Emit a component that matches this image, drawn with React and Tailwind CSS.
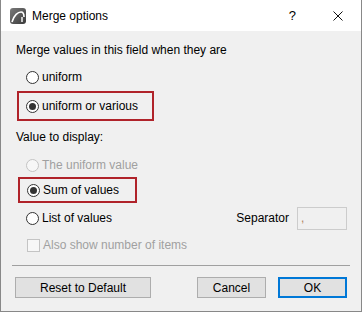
import React from "react";

const FONT = { fontFamily: '"Liberation Sans", Arial, sans-serif' };

function Radio({ checked, disabled }) {
  return (
    <span
      className={`w-[13px] h-[13px] rounded-full border flex items-center justify-center shrink-0 ${
        disabled ? "border-[#c4c4c4] bg-[#f7f7f7]" : "border-[#333] bg-white"
      }`}
    >
      {checked && <span className="w-[7px] h-[7px] rounded-full bg-[#333]" />}
    </span>
  );
}

function AppIcon() {
  return (
    <svg width="16" height="16" viewBox="0 0 16 16">
      <defs>
        <linearGradient id="g" x1="0" y1="0" x2="1" y2="1">
          <stop offset="0" stopColor="#7a7a7a" />
          <stop offset="1" stopColor="#3a3a3a" />
        </linearGradient>
      </defs>
      <rect x="0" y="0" width="16" height="16" rx="3" fill="url(#g)" />
      <path d="M2 14 C4 7 8 4 11 4 C13 4 14 6 14 9" stroke="#fff" strokeWidth="1.6" fill="none" />
      <path d="M12 9 L12 14" stroke="#fff" strokeWidth="1.4" />
    </svg>
  );
}

function Button({ children, primary, className }) {
  return (
    <button
      type="button"
      className={`h-[21px] bg-[#e1e1e1] text-[12px] text-black flex items-center justify-center ${
        primary ? "border-2 border-[#0078d7]" : "border border-[#adadad]"
      } ${className}`}
    >
      {children}
    </button>
  );
}

export default function App() {
  return (
    <div className="w-[362px] h-[312px] flex flex-col text-[12px] text-black" style={FONT}>
      <div className="h-[31px] bg-white flex items-center pl-[9px] pr-[18px] border-l border-r border-[#888]">
        <AppIcon />
        <span className="ml-[6px] text-[12px] flex-1">Merge options</span>
        <span className="text-[13px] mr-[37px]">?</span>
        <svg width="10" height="10" viewBox="0 0 10 10">
          <path d="M0.5 0.5 L9.5 9.5 M9.5 0.5 L0.5 9.5" stroke="#111" strokeWidth="1" />
        </svg>
      </div>
      <div className="flex-1 bg-[#f0f0f0] border-l border-r border-b border-[#888] flex flex-col">
        <div className="h-[16px] mt-[11px] pl-[15px] flex items-center">Merge values in this field when they are</div>
        <div className="h-[16px] mt-[11px] pl-[25px] flex items-center gap-[3px]">
          <Radio />
          <span>uniform</span>
        </div>
        <div className="ml-[16px] mt-[6px] w-[137px] h-[30px] border-2 border-[#b0232a] pl-[7px] flex items-center gap-[3px]">
          <Radio checked />
          <span>uniform or various</span>
        </div>
        <div className="h-[16px] mt-[8px] pl-[15px] flex items-center">Value to display:</div>
        <div className="h-[16px] mt-[12px] pl-[25px] flex items-center gap-[3px] text-[#a0a0a0]">
          <Radio disabled />
          <span>The uniform value</span>
        </div>
        <div className="ml-[17px] mt-[4px] w-[119px] h-[26px] border-2 border-[#b0232a] pl-[7px] flex items-center gap-[3px]">
          <Radio checked />
          <span>Sum of values</span>
        </div>
        <div className="h-[22px] mt-[4px] pl-[25px] pr-[14px] flex items-center gap-[3px]">
          <Radio />
          <span className="flex-1">List of values</span>
          <span className="mr-[5px]">Separator</span>
          <div className="w-[50px] h-[23px] border border-[#cccccc] bg-[#f0f0f0] pl-[3px] flex items-center text-[#b08060]">,</div>
        </div>
        <div className="h-[16px] mt-[8px] pl-[26px] flex items-center gap-[3px] text-[#a0a0a0]">
          <span className="w-[13px] h-[13px] border border-[#c4c4c4] bg-[#f7f7f7]" />
          <span>Also show number of items</span>
        </div>
        <div className="mx-[11px] mt-[12px] h-px bg-[#a0a0a0]" />
        <div className="mt-[11px] pl-[14px] pr-[14px] flex items-center">
          <Button className="w-[136px]">Reset to Default</Button>
          <div className="flex-1" />
          <Button className="w-[69px]">Cancel</Button>
          <Button primary className="w-[69px] ml-[12px]">OK</Button>
        </div>
      </div>
    </div>
  );
}
